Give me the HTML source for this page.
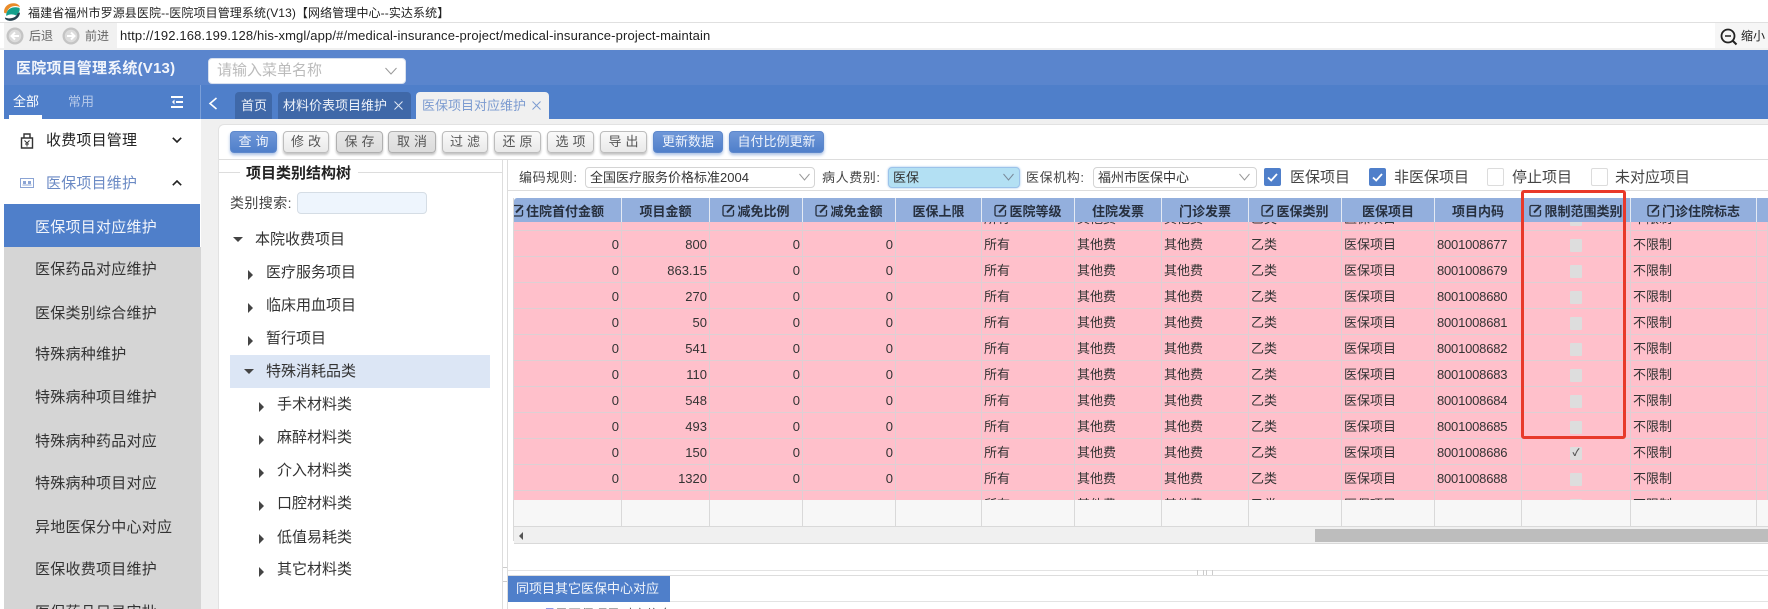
<!DOCTYPE html>
<html lang="zh"><head><meta charset="utf-8"><title>医院项目管理系统</title>
<style>
*{box-sizing:border-box}
html,body{margin:0;padding:0;width:1768px;height:609px;overflow:hidden;background:#fff}
body{position:relative;font-family:"Liberation Sans","Noto Sans CJK SC",sans-serif;font-size:13px;color:#333}
.a{position:absolute;white-space:nowrap}
.t{position:absolute;white-space:nowrap;line-height:20px;height:20px}
.b{position:absolute;top:131px;height:22px;border:1px solid #bdbdbd;border-radius:4px;background:linear-gradient(#fafafa,#e9e9e9);box-shadow:0 2px 2px #c4c4c4;text-align:center;line-height:20px;color:#555;font-size:13px;letter-spacing:4px;text-indent:4px}
.b.d{background:linear-gradient(#e8e8e8,#dcdcdc);border-color:#b0b0b0}
.b.p{background:linear-gradient(#6f97d8,#4f7fca);border-color:#5d88cc;color:#eef3fb;box-shadow:0 2px 3px #a9c0e4}
.b.q{letter-spacing:0;text-indent:0;background:linear-gradient(#6f97d8,#4f7fca);border-color:#5d88cc;color:#eef3fb;box-shadow:0 2px 3px #a9c0e4}
.m{position:absolute;left:35px;font-size:15px;line-height:20px;letter-spacing:.25px;color:#333;white-space:nowrap}
.n{position:absolute;font-size:15px;line-height:20px;color:#333;white-space:nowrap}
.ar{position:absolute;width:0;height:0;border-top:5px solid transparent;border-bottom:5px solid transparent;border-left:5px solid #444}
.ad{position:absolute;width:0;height:0;border-left:5px solid transparent;border-right:5px solid transparent;border-top:5px solid #444}
.s{position:absolute;top:167px;height:21px;border:1px solid #d4d4d4;border-radius:4px;background:#fff;line-height:19px;padding-left:4px;font-size:13px;color:#333}
.l{position:absolute;top:168px;line-height:20px;font-size:13px;letter-spacing:.6px;color:#444;white-space:nowrap}
.cb{position:absolute;top:168px;width:17px;height:18px;border:1px solid #dcdcdc;border-radius:2px;background:#fff}
.cb.on{background:#4f7fca;border-color:#4f7fca}
.h{position:absolute;top:198px;height:24px;background:#93afdd;border-right:1px solid #e4eaf4;display:flex;align-items:center;justify-content:center;font-weight:bold;font-size:13px;color:#27303f;white-space:nowrap;overflow:hidden}
.h svg{flex:none;margin-right:2px}
.clip{position:absolute;left:514px;top:222px;width:1254px;height:278px;overflow:hidden;background:#ffc0cb}
table{position:absolute;left:0;top:-17px;border-collapse:separate;border-spacing:0;table-layout:fixed;width:1254px}
td{height:26px;padding:2px 2px 0 2px;border-right:1px solid #ddd0d4;border-bottom:1px solid #ddd0d4;background:#ffc0cb;color:#333;font-size:13px;line-height:23px;white-space:nowrap;overflow:hidden}
td.r{text-align:right}
td.c{text-align:center;padding:2px 0 0 0}
td.k{letter-spacing:-.2px}
td i{display:inline-block;width:12px;height:13px;background:#ddd;vertical-align:middle;border-radius:1px;font-style:normal;font-size:10px;line-height:13px;color:#555;font-weight:bold}
.f{position:absolute;top:500px;height:26px;background:#f7f7f7;border-right:1px solid #d9d9d9}
</style></head><body>

<!-- title bar -->
<svg class="a" style="left:2px;top:2px" width="20" height="20" viewBox="0 0 20 20"><path d="M2 10C2 4 7 1 12 1.200 15 1.400 17.500 3 18 5 13 2.800 6.500 4 4.500 11 3 11.500 2 11 2 10Z" fill="#e98b2a"/><path d="M4.500 11C6 6 12 4 17.500 6 18.500 9 16 12 14 13.500 11 12 7 12 4.500 14 4 13 4.200 12 4.500 11Z" fill="#15a08c"/><path d="M18 11C17.500 16 12 19.500 7 18.800 4 18.300 2.500 16.500 3 15.500 8 17.500 14 16 15.500 11.500 16.800 10.500 18 10 18 11Z" fill="#27414f"/></svg>
<div class="t" style="left:28px;top:3px;font-size:12px;letter-spacing:.1px;color:#222">福建省福州市罗源县医院--医院项目管理系统(V13)【网络管理中心--实达系统】</div>
<div class="a" style="left:0;top:22px;width:1768px;height:1px;background:#e0e0e0"></div>

<!-- address bar -->
<div class="a" style="left:4px;top:23px;width:113px;height:25px;background:#f1f1f1"></div>
<div class="a" style="left:1715px;top:23px;width:53px;height:25px;background:#f6f6f6"></div>
<div class="a" style="left:0;top:48px;width:1768px;height:2px;background:#f0f0f0"></div>
<svg class="a" style="left:6px;top:27px" width="18" height="18" viewBox="0 0 18 18"><circle cx="9" cy="9" r="8.500" fill="#c4c4c4"/><circle cx="9" cy="9" r="6.200" fill="#dcdcdc"/><path d="M13 9H6M9 5.500 5.500 9 9 12.500" fill="none" stroke="#fff" stroke-width="2"/></svg>
<div class="t" style="left:29px;top:26px;font-size:12px;color:#666">后退</div>
<svg class="a" style="left:62px;top:27px" width="18" height="18" viewBox="0 0 18 18"><circle cx="9" cy="9" r="8.500" fill="#c4c4c4"/><circle cx="9" cy="9" r="6.200" fill="#dcdcdc"/><path d="M5 9h7M9 5.500 12.500 9 9 12.500" fill="none" stroke="#fff" stroke-width="2"/></svg>
<div class="t" style="left:85px;top:26px;font-size:12px;color:#666">前进</div>
<div class="t" style="left:120px;top:26px;font-size:13px;letter-spacing:.14px;color:#222">http://192.168.199.128/his-xmgl/app/#/medical-insurance-project/medical-insurance-project-maintain</div>
<svg class="a" style="left:1720px;top:28px" width="18" height="18" viewBox="0 0 18 18"><circle cx="8" cy="8" r="6.500" fill="none" stroke="#222" stroke-width="1.800"/><path d="M5 8h6" stroke="#222" stroke-width="1.500"/><path d="M12.500 12.500 16.500 16.500" stroke="#222" stroke-width="2"/></svg>
<div class="t" style="left:1741px;top:26px;font-size:12px;color:#222">缩小</div>

<!-- header -->
<div class="a" style="left:4px;top:50px;width:1764px;height:35px;background:#5a85cd"></div>
<div class="a" style="left:4px;top:85px;width:1764px;height:34px;background:#4f7fca"></div>
<div class="t" style="left:16px;top:59px;font-size:15px;font-weight:bold;letter-spacing:.2px;color:#f2f5fb">医院项目管理系统(V13)</div>
<div class="a" style="left:208px;top:58px;width:198px;height:26px;background:#fff;border-radius:4px;border:1px solid #d8e0ee"></div>
<div class="t" style="left:217px;top:61px;font-size:15px;color:#bbb">请输入菜单名称</div>
<svg class="a" style="left:385px;top:67px" width="12" height="8" viewBox="0 0 12 8"><path d="M.5 1 6 7 11.500 1" fill="none" stroke="#999" stroke-width="1"/></svg>

<!-- sidebar tabs -->
<div class="t" style="left:13px;top:92px;color:#fff">全部</div>
<div class="t" style="left:68px;top:92px;color:#b6c9e9">常用</div>
<div class="a" style="left:9px;top:115px;width:33px;height:4px;background:#fff"></div>
<svg class="a" style="left:171px;top:96px" width="12" height="12" viewBox="0 0 12 12"><path d="M0 1h12M5 6h7M0 11h12" stroke="#fff" stroke-width="2"/><path d="M3.500 3.500 1 6l2.500 2.500z" fill="#fff"/></svg>
<div class="a" style="left:200px;top:85px;width:1px;height:34px;background:#7b9fd8"></div>

<!-- sidebar -->
<div class="a" style="left:4px;top:119px;width:196px;height:85px;background:#fff"></div>
<svg class="a" style="left:20px;top:133px" width="14" height="16" viewBox="0 0 14 16"><path d="M1.500 5h11v10h-11zM4 5V1h6v4M1.500 5h11" fill="none" stroke="#333" stroke-width="1.400"/><path d="M4.500 7.500 7 10l2.500-2.500M7 10v3.500M5 11h4" fill="none" stroke="#333" stroke-width="1"/></svg>
<div class="n" style="left:46px;top:131px;color:#222;letter-spacing:.2px">收费项目管理</div>
<svg class="a" style="left:172px;top:137px" width="10" height="6" viewBox="0 0 10 6"><path d="M.8.8 5 5 9.200.8" fill="none" stroke="#222" stroke-width="1.600"/></svg>
<svg class="a" style="left:20px;top:178px" width="14" height="10" viewBox="0 0 14 10"><rect x=".5" y=".5" width="13" height="9" fill="none" stroke="#8ba4d4"/><rect x="3" y="3" width="3" height="3" fill="#8ba4d4"/><rect x="8" y="3" width="3" height="3" fill="#8ba4d4"/><path d="M2.500 7h9" stroke="#8ba4d4"/></svg>
<div class="n" style="left:46px;top:174px;color:#6b8ac4;letter-spacing:.2px">医保项目维护</div>
<svg class="a" style="left:172px;top:180px" width="10" height="6" viewBox="0 0 10 6"><path d="M.8 5.200 5 1 9.200 5.200" fill="none" stroke="#222" stroke-width="1.600"/></svg>
<div class="a" style="left:4px;top:204px;width:196px;height:43px;background:#4f7fca"></div>
<div class="a" style="left:4px;top:247px;width:197px;height:362px;background:#d5d5d5"></div>
<div class="m" style="top:218px;color:#f2f5fb">医保项目对应维护</div>
<div class="m" style="top:260px">医保药品对应维护</div>
<div class="m" style="top:304px">医保类别综合维护</div>
<div class="m" style="top:345px">特殊病种维护</div>
<div class="m" style="top:388px">特殊病种项目维护</div>
<div class="m" style="top:432px">特殊病种药品对应</div>
<div class="m" style="top:474px">特殊病种项目对应</div>
<div class="m" style="top:518px">异地医保分中心对应</div>
<div class="m" style="top:560px">医保收费项目维护</div>
<div class="m" style="top:603px">医保药品目录审批</div>

<!-- tabs -->
<svg class="a" style="left:208px;top:97px" width="10" height="13" viewBox="0 0 10 13"><path d="M8.500 1 2 6.500 8.500 12" fill="none" stroke="#fff" stroke-width="1.600"/></svg>
<div class="a" style="left:235px;top:92px;width:37px;height:27px;background:#3f68a8;border-radius:4px 4px 0 0"></div>
<div class="t" style="left:241px;top:96px;color:#eef2f9">首页</div>
<div class="a" style="left:278px;top:92px;width:133px;height:27px;background:#3f68a8;border-radius:4px 4px 0 0"></div>
<div class="t" style="left:283px;top:96px;color:#eef2f9">材料价表项目维护</div>
<svg class="a" style="left:394px;top:101px" width="9" height="9" viewBox="0 0 9 9"><path d="M.5.500 8.500 8.500M8.500.500.500 8.500" stroke="#dfe7f4" stroke-width="1"/></svg>
<div class="a" style="left:416px;top:92px;width:133px;height:27px;background:#f0f0f0;border-radius:4px 4px 0 0"></div>
<div class="t" style="left:422px;top:96px;color:#7c9bd0">医保项目对应维护</div>
<svg class="a" style="left:532px;top:101px" width="9" height="9" viewBox="0 0 9 9"><path d="M.5.500 8.500 8.500M8.500.500.500 8.500" stroke="#7c9bd0" stroke-width="1"/></svg>

<!-- content background -->
<div class="a" style="left:201px;top:119px;width:1567px;height:490px;background:#f0f0f0"></div>
<div class="a" style="left:218px;top:124px;width:1550px;height:485px;background:#fff;border:1px solid #e2e2e2;border-right:0;border-bottom:0;border-radius:6px 0 0 0"></div>

<!-- toolbar -->
<div class="b p" style="left:230px;width:47px">查询</div>
<div class="b" style="left:283px;width:46px">修改</div>
<div class="b d" style="left:336px;width:47px">保存</div>
<div class="b d" style="left:388px;width:48px">取消</div>
<div class="b" style="left:442px;width:46px">过滤</div>
<div class="b" style="left:494px;width:47px">还原</div>
<div class="b" style="left:547px;width:47px">选项</div>
<div class="b" style="left:600px;width:47px">导出</div>
<div class="b q" style="left:653px;width:70px">更新数据</div>
<div class="b q" style="left:729px;width:95px">自付比例更新</div>
<div class="a" style="left:219px;top:159px;width:1549px;height:1px;background:#ddd"></div>

<!-- tree -->
<div class="a" style="left:502px;top:160px;width:1px;height:449px;background:#ddd"></div>
<div class="a" style="left:507px;top:160px;width:1px;height:449px;background:#ddd"></div>
<div class="a" style="left:219px;top:172px;width:21px;height:1px;background:#ddd"></div>
<div class="a" style="left:358px;top:172px;width:144px;height:1px;background:#ddd"></div>
<div class="t" style="left:246px;top:164px;font-size:15px;font-weight:bold;color:#222">项目类别结构树</div>
<div class="t" style="left:230px;top:193px;font-size:14px;letter-spacing:.4px;color:#444">类别搜索:</div>
<div class="a" style="left:297px;top:192px;width:130px;height:22px;background:#eef5fd;border:1px solid #d5dde5;border-radius:4px"></div>
<div class="a" style="left:230px;top:355px;width:260px;height:33px;background:#dce6f5"></div>
<div class="ad" style="left:233px;top:237px"></div><div class="n" style="left:255px;top:230px">本院收费项目</div>
<div class="ar" style="left:248px;top:270px"></div><div class="n" style="left:266px;top:263px">医疗服务项目</div>
<div class="ar" style="left:248px;top:303px"></div><div class="n" style="left:266px;top:296px">临床用血项目</div>
<div class="ar" style="left:248px;top:336px"></div><div class="n" style="left:266px;top:329px">暂行项目</div>
<div class="ad" style="left:244px;top:369px"></div><div class="n" style="left:266px;top:362px">特殊消耗品类</div>
<div class="ar" style="left:259px;top:402px"></div><div class="n" style="left:277px;top:395px">手术材料类</div>
<div class="ar" style="left:259px;top:435px"></div><div class="n" style="left:277px;top:428px">麻醉材料类</div>
<div class="ar" style="left:259px;top:468px"></div><div class="n" style="left:277px;top:461px">介入材料类</div>
<div class="ar" style="left:259px;top:501px"></div><div class="n" style="left:277px;top:494px">口腔材料类</div>
<div class="ar" style="left:259px;top:534px"></div><div class="n" style="left:277px;top:528px">低值易耗类</div>
<div class="ar" style="left:259px;top:567px"></div><div class="n" style="left:277px;top:560px">其它材料类</div>

<!-- filter row -->
<div class="l" style="left:519px">编码规则:</div>
<div class="s" style="left:585px;width:230px">全国医疗服务价格标准2004</div>
<svg class="a" style="left:799px;top:173px" width="11" height="8" viewBox="0 0 11 8"><path d="M.5 1 5.500 7 10.500 1" fill="none" stroke="#999"/></svg>
<div class="l" style="left:822px">病人费别:</div>
<div class="s" style="left:888px;width:132px;background:#b3e0f3;border-color:#9cc3ea;box-shadow:0 0 2px #9cc3ea">医保</div>
<svg class="a" style="left:1003px;top:173px" width="11" height="8" viewBox="0 0 11 8"><path d="M.5 1 5.500 7 10.500 1" fill="none" stroke="#7a8a99"/></svg>
<div class="l" style="left:1026px">医保机构:</div>
<div class="s" style="left:1093px;width:164px">福州市医保中心</div>
<svg class="a" style="left:1239px;top:173px" width="11" height="8" viewBox="0 0 11 8"><path d="M.5 1 5.500 7 10.500 1" fill="none" stroke="#999"/></svg>
<div class="cb on" style="left:1264px"><svg width="15" height="16" viewBox="0 0 15 16" style="display:block"><path d="M3 8.500 6.200 11.500 12 5" fill="none" stroke="#fff" stroke-width="1.800"/></svg></div>
<div class="t" style="left:1290px;top:168px;font-size:15px;color:#444">医保项目</div>
<div class="cb on" style="left:1369px"><svg width="15" height="16" viewBox="0 0 15 16" style="display:block"><path d="M3 8.500 6.200 11.500 12 5" fill="none" stroke="#fff" stroke-width="1.800"/></svg></div>
<div class="t" style="left:1394px;top:168px;font-size:15px;color:#444">非医保项目</div>
<div class="cb" style="left:1487px"></div>
<div class="t" style="left:1512px;top:168px;font-size:15px;color:#444">停止项目</div>
<div class="cb" style="left:1591px"></div>
<div class="t" style="left:1615px;top:168px;font-size:15px;color:#444">未对应项目</div>
<div class="a" style="left:508px;top:190px;width:1260px;height:1px;background:#ddd"></div>

<!-- grid header -->
<div class="h" style="left:514px;width:108px;justify-content:flex-start;border-radius:3px 0 0 0"><svg width="13" height="13" viewBox="0 0 13 13" style="margin-left:-3px"><path d="M10 1.500H2.500a1.500 1.500 0 0 0-1.500 1.500v7.500a1.500 1.500 0 0 0 1.500 1.500H10a1.500 1.500 0 0 0 1.500-1.500V6" fill="none" stroke="#27303f" stroke-width="1.300"/><path d="M5 8.500 11.800 1.500" stroke="#27303f" stroke-width="2"/></svg>住院首付金额</div>
<div class="h" style="left:622px;width:88px">项目金额</div>
<div class="h" style="left:710px;width:93px"><svg width="13" height="13" viewBox="0 0 13 13"><path d="M10 1.500H2.500a1.500 1.500 0 0 0-1.500 1.500v7.500a1.500 1.500 0 0 0 1.500 1.500H10a1.500 1.500 0 0 0 1.500-1.500V6" fill="none" stroke="#27303f" stroke-width="1.300"/><path d="M5 8.500 11.800 1.500" stroke="#27303f" stroke-width="2"/></svg>减免比例</div>
<div class="h" style="left:803px;width:93px"><svg width="13" height="13" viewBox="0 0 13 13"><path d="M10 1.500H2.500a1.500 1.500 0 0 0-1.500 1.500v7.500a1.500 1.500 0 0 0 1.500 1.500H10a1.500 1.500 0 0 0 1.500-1.500V6" fill="none" stroke="#27303f" stroke-width="1.300"/><path d="M5 8.500 11.800 1.500" stroke="#27303f" stroke-width="2"/></svg>减免金额</div>
<div class="h" style="left:896px;width:86px">医保上限</div>
<div class="h" style="left:982px;width:93px"><svg width="13" height="13" viewBox="0 0 13 13"><path d="M10 1.500H2.500a1.500 1.500 0 0 0-1.500 1.500v7.500a1.500 1.500 0 0 0 1.500 1.500H10a1.500 1.500 0 0 0 1.500-1.500V6" fill="none" stroke="#27303f" stroke-width="1.300"/><path d="M5 8.500 11.800 1.500" stroke="#27303f" stroke-width="2"/></svg>医院等级</div>
<div class="h" style="left:1075px;width:87px">住院发票</div>
<div class="h" style="left:1162px;width:87px">门诊发票</div>
<div class="h" style="left:1249px;width:93px"><svg width="13" height="13" viewBox="0 0 13 13"><path d="M10 1.500H2.500a1.500 1.500 0 0 0-1.500 1.500v7.500a1.500 1.500 0 0 0 1.500 1.500H10a1.500 1.500 0 0 0 1.500-1.500V6" fill="none" stroke="#27303f" stroke-width="1.300"/><path d="M5 8.500 11.800 1.500" stroke="#27303f" stroke-width="2"/></svg>医保类别</div>
<div class="h" style="left:1342px;width:93px">医保项目</div>
<div class="h" style="left:1435px;width:87px">项目内码</div>
<div class="h" style="left:1522px;width:109px"><svg width="13" height="13" viewBox="0 0 13 13"><path d="M10 1.500H2.500a1.500 1.500 0 0 0-1.500 1.500v7.500a1.500 1.500 0 0 0 1.500 1.500H10a1.500 1.500 0 0 0 1.500-1.500V6" fill="none" stroke="#27303f" stroke-width="1.300"/><path d="M5 8.500 11.800 1.500" stroke="#27303f" stroke-width="2"/></svg>限制范围类别</div>
<div class="h" style="left:1631px;width:126px"><svg width="13" height="13" viewBox="0 0 13 13"><path d="M10 1.500H2.500a1.500 1.500 0 0 0-1.500 1.500v7.500a1.500 1.500 0 0 0 1.500 1.500H10a1.500 1.500 0 0 0 1.500-1.500V6" fill="none" stroke="#27303f" stroke-width="1.300"/><path d="M5 8.500 11.800 1.500" stroke="#27303f" stroke-width="2"/></svg>门诊住院标志</div>
<div class="h" style="left:1757px;width:11px;border-right:0"></div>

<!-- grid body -->
<div class="clip"><table>
<colgroup><col style="width:108px"><col style="width:88px"><col style="width:93px"><col style="width:93px"><col style="width:86px"><col style="width:93px"><col style="width:87px"><col style="width:87px"><col style="width:93px"><col style="width:93px"><col style="width:87px"><col style="width:109px"><col style="width:126px"><col style="width:11px"></colgroup>
<tr><td class="r"></td><td class="r"></td><td class="r"></td><td class="r"></td><td></td><td>所有</td><td>其他费</td><td>其他费</td><td>乙类</td><td>医保项目</td><td class="k"></td><td class="c"><i></i></td><td>不限制</td><td></td></tr>
<tr><td class="r">0</td><td class="r">800</td><td class="r">0</td><td class="r">0</td><td></td><td>所有</td><td>其他费</td><td>其他费</td><td>乙类</td><td>医保项目</td><td class="k">8001008677</td><td class="c"><i></i></td><td>不限制</td><td></td></tr>
<tr><td class="r">0</td><td class="r">863.15</td><td class="r">0</td><td class="r">0</td><td></td><td>所有</td><td>其他费</td><td>其他费</td><td>乙类</td><td>医保项目</td><td class="k">8001008679</td><td class="c"><i></i></td><td>不限制</td><td></td></tr>
<tr><td class="r">0</td><td class="r">270</td><td class="r">0</td><td class="r">0</td><td></td><td>所有</td><td>其他费</td><td>其他费</td><td>乙类</td><td>医保项目</td><td class="k">8001008680</td><td class="c"><i></i></td><td>不限制</td><td></td></tr>
<tr><td class="r">0</td><td class="r">50</td><td class="r">0</td><td class="r">0</td><td></td><td>所有</td><td>其他费</td><td>其他费</td><td>乙类</td><td>医保项目</td><td class="k">8001008681</td><td class="c"><i></i></td><td>不限制</td><td></td></tr>
<tr><td class="r">0</td><td class="r">541</td><td class="r">0</td><td class="r">0</td><td></td><td>所有</td><td>其他费</td><td>其他费</td><td>乙类</td><td>医保项目</td><td class="k">8001008682</td><td class="c"><i></i></td><td>不限制</td><td></td></tr>
<tr><td class="r">0</td><td class="r">110</td><td class="r">0</td><td class="r">0</td><td></td><td>所有</td><td>其他费</td><td>其他费</td><td>乙类</td><td>医保项目</td><td class="k">8001008683</td><td class="c"><i></i></td><td>不限制</td><td></td></tr>
<tr><td class="r">0</td><td class="r">548</td><td class="r">0</td><td class="r">0</td><td></td><td>所有</td><td>其他费</td><td>其他费</td><td>乙类</td><td>医保项目</td><td class="k">8001008684</td><td class="c"><i></i></td><td>不限制</td><td></td></tr>
<tr><td class="r">0</td><td class="r">493</td><td class="r">0</td><td class="r">0</td><td></td><td>所有</td><td>其他费</td><td>其他费</td><td>乙类</td><td>医保项目</td><td class="k">8001008685</td><td class="c"><i></i></td><td>不限制</td><td></td></tr>
<tr><td class="r">0</td><td class="r">150</td><td class="r">0</td><td class="r">0</td><td></td><td>所有</td><td>其他费</td><td>其他费</td><td>乙类</td><td>医保项目</td><td class="k">8001008686</td><td class="c"><i>✓</i></td><td>不限制</td><td></td></tr>
<tr><td class="r">0</td><td class="r">1320</td><td class="r">0</td><td class="r">0</td><td></td><td>所有</td><td>其他费</td><td>其他费</td><td>乙类</td><td>医保项目</td><td class="k">8001008688</td><td class="c"><i></i></td><td>不限制</td><td></td></tr>
<tr><td class="r"></td><td class="r"></td><td class="r"></td><td class="r"></td><td></td><td>所有</td><td>其他费</td><td>其他费</td><td>乙类</td><td>医保项目</td><td class="k"></td><td class="c"><i></i></td><td>不限制</td><td></td></tr>
</table></div>

<!-- grid footer -->
<div class="f" style="left:514px;width:108px"></div><div class="f" style="left:622px;width:88px"></div><div class="f" style="left:710px;width:93px"></div><div class="f" style="left:803px;width:93px"></div><div class="f" style="left:896px;width:86px"></div><div class="f" style="left:982px;width:93px"></div><div class="f" style="left:1075px;width:87px"></div><div class="f" style="left:1162px;width:87px"></div><div class="f" style="left:1249px;width:93px"></div><div class="f" style="left:1342px;width:93px"></div><div class="f" style="left:1435px;width:87px"></div><div class="f" style="left:1522px;width:109px"></div><div class="f" style="left:1631px;width:126px"></div><div class="f" style="left:1757px;width:11px;border-right:0"></div>
<div class="a" style="left:513px;top:198px;width:1px;height:343px;background:#d9d9d9"></div>
<div class="a" style="left:514px;top:526px;width:1254px;height:18px;background:#f0f0f0;border-top:1px solid #d9d9d9;border-bottom:1px solid #d9d9d9"></div>
<div class="a" style="left:1315px;top:529px;width:453px;height:13px;background:#bdbdbd"></div>
<div class="a" style="left:519px;top:532px;width:0;height:0;border-top:4px solid transparent;border-bottom:4px solid transparent;border-right:4px solid #555"></div>

<!-- red box -->
<div class="a" style="left:1521px;top:190px;width:105px;height:249px;border:3px solid #e8392a;border-radius:3px"></div>

<!-- lower panel -->
<div class="a" style="left:508px;top:570px;width:1260px;height:1px;background:#e3e3e3"></div>
<div class="a" style="left:508px;top:575px;width:1260px;height:1px;background:#ddd"></div>
<div class="a" style="left:508px;top:601px;width:1260px;height:1px;background:#e3e3e3"></div>
<div class="a" style="left:508px;top:576px;width:162px;height:26px;background:#4f7fca"></div>
<div class="t" style="left:516px;top:579px;color:#f2f5fb">同项目其它医保中心对应</div>
<div class="a" style="left:1197px;top:570px;width:16px;height:5px;border-left:1px solid #ccc;border-right:1px solid #ccc"></div>
<div class="a" style="left:1203px;top:570px;width:4px;height:5px;border-left:1px solid #ccc;border-right:1px solid #ccc"></div>
<div class="a" style="left:503px;top:567px;width:4px;height:15px;border-top:1px solid #ccc;border-bottom:1px solid #ccc"></div>
<div class="a" style="left:541px;top:607px;width:130px;height:2px;overflow:hidden"><span style="position:absolute;left:0;top:0;font-size:13px;line-height:16px;color:#2233cc">项</span><span style="position:absolute;left:14px;top:0;font-size:13px;line-height:16px;color:#555;white-space:nowrap">目医保项目对应信息</span></div>
</body></html>
